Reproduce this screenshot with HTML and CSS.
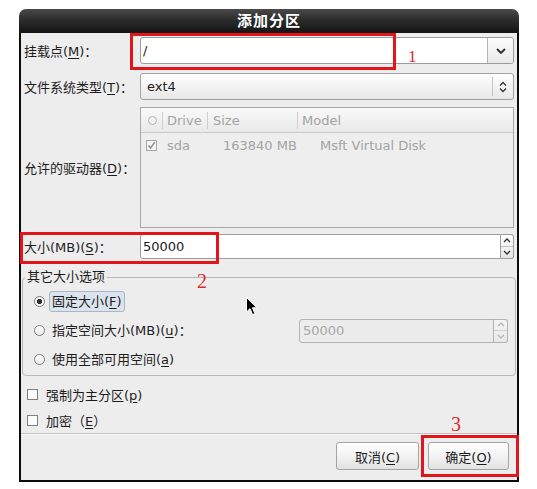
FILE: index.html
```html
<!DOCTYPE html>
<html lang="zh-CN">
<head>
<meta charset="utf-8">
<title>添加分区</title>
<link rel="stylesheet" href="styles.css">
</head>
<body>
<div class="window">
  <div class="titlebar">添加分区</div>
  <div class="dialog">
    <div class="form">
      <div class="row row-mount">
        <span class="lbl">挂载点(<u>M</u>)：</span>
        <div class="combo-entry">
          <span class="ce-text">/</span>
          <span class="ce-btn"><svg width="10" height="6" viewBox="0 0 10 6"><path d="M1 1 L5 5 L9 1" fill="none" stroke="#2b2b2b" stroke-width="1.8"/></svg></span>
        </div>
      </div>
      <div class="row row-fs">
        <span class="lbl">文件系统类型(<u>T</u>)：</span>
        <div class="combo">
          <span class="combo-text">ext4</span>
          <span class="combo-arrows"><svg width="8" height="12" viewBox="0 0 8 12"><path d="M1 4.5 L4 1.5 L7 4.5 M1 7.5 L4 10.5 L7 7.5" fill="none" stroke="#333" stroke-width="1.3"/></svg></span>
        </div>
      </div>
      <div class="row row-drives">
        <span class="lbl">允许的驱动器(<u>D</u>)：</span>
        <div class="drive-list">
          <div class="dl-head">
            <span class="hc hc-check"><span class="head-circle"></span></span>
            <span class="hc hc-drive">Drive</span>
            <span class="hc hc-size">Size</span>
            <span class="hc hc-model">Model</span>
          </div>
          <div class="dl-row">
            <span class="rc rc-check"><span class="tick-box"><svg width="9" height="9" viewBox="0 0 9 9"><path d="M1.5 4.5 L3.5 7 L7.8 1.2" fill="none" stroke="#8c8c8c" stroke-width="1.4"/></svg></span></span>
            <span class="rc rc-drive">sda</span>
            <span class="rc rc-size">163840 MB</span>
            <span class="rc rc-model">Msft Virtual Disk</span>
          </div>
        </div>
      </div>
      <div class="row row-size">
        <span class="lbl">大小(MB)(<u>S</u>)：</span>
        <div class="spin">
          <span class="spin-text">50000</span>
          <span class="spin-btns">
            <span class="sb"><svg width="8" height="5" viewBox="0 0 8 5"><path d="M1 4 L4 1 L7 4" fill="none" stroke="#333" stroke-width="1.3"/></svg></span>
            <span class="sb sb-down"><svg width="8" height="5" viewBox="0 0 8 5"><path d="M1 1 L4 4 L7 1" fill="none" stroke="#333" stroke-width="1.3"/></svg></span>
          </span>
        </div>
      </div>
    </div>

    <fieldset class="frame">
      <legend>其它大小选项</legend>
      <div class="opt">
        <span class="radio on"></span><span class="opt-label focus">固定大小(<u>F</u>)</span>
      </div>
      <div class="opt">
        <span class="radio"></span><span class="opt-label">指定空间大小(MB)(<u>u</u>)：</span>
        <div class="spin spin-disabled">
          <span class="spin-text">50000</span>
          <span class="spin-btns">
            <span class="sb"><svg width="8" height="5" viewBox="0 0 8 5"><path d="M1 4 L4 1 L7 4" fill="none" stroke="#b4b4b4" stroke-width="1.2"/></svg></span>
            <span class="sb sb-down"><svg width="8" height="5" viewBox="0 0 8 5"><path d="M1 1 L4 4 L7 1" fill="none" stroke="#b4b4b4" stroke-width="1.2"/></svg></span>
          </span>
        </div>
      </div>
      <div class="opt">
        <span class="radio"></span><span class="opt-label">使用全部可用空间(<u>a</u>)</span>
      </div>
    </fieldset>

    <div class="checks">
      <div class="chk"><span class="cbox"></span><span>强制为主分区(<u>p</u>)</span></div>
      <div class="chk"><span class="cbox"></span><span>加密（<u>E</u>）</span></div>
    </div>

    <div class="separator"></div>

    <div class="buttons">
      <button class="btn btn-cancel">取消(<u>C</u>)</button>
      <button class="btn btn-ok">确定(<u>O</u>)</button>
    </div>
  </div>

  <div class="mark mark-1"></div>
  <div class="mark mark-2"></div>
  <div class="mark mark-3"></div>
  <span class="num num-1">1</span>
  <span class="num num-2">2</span>
  <span class="num num-3">3</span>

  <svg class="cursor" width="12" height="19" viewBox="0 0 12 19"><path d="M0.5 0.5 L0.5 15 L4 11.6 L6.6 17.6 L8.9 16.6 L6.4 10.8 L11 10.8 Z" fill="#000" stroke="#fff" stroke-width="1"/></svg>
</div>
</body>
</html>
```

FILE: styles.css
```css
* { box-sizing: border-box; }

html, body {
  margin: 0;
  padding: 0;
  background: #ffffff;
}

body {
  font-family: "DejaVu Sans", "Noto Sans CJK SC", sans-serif;
  font-size: 13px;
  color: #1c1c1c;
}

u { text-decoration: underline; text-underline-offset: 2px; }

.window {
  position: relative;
  width: 500px;
  margin: 9px 0 0 19px;
}

.titlebar {
  height: 24px;
  background: linear-gradient(#4a4a4a 0%, #2c2c2c 45%, #141414 100%);
  border-radius: 7px 7px 0 0;
  color: #ffffff;
  font-weight: bold;
  font-size: 15px;
  line-height: 24px;
  text-align: center;
  letter-spacing: 1px;
}

.dialog {
  height: 449px;
  background: #ededed;
  border: 2px solid #0c0c0c;
  border-top: 0;
  display: flex;
  flex-direction: column;
}

/* ---------- form rows ---------- */
.form {
  padding: 4px 3px 0 3px;
  display: flex;
  flex-direction: column;
}

.row {
  display: flex;
  align-items: center;
}

.lbl {
  width: 116px;
  flex: none;
  white-space: nowrap;
}

.row-mount { height: 27px; margin-bottom: 9px; }
.row-fs { height: 27px; margin-bottom: 7px; }
.row-drives { height: 121px; margin-bottom: 6px; }
.row-size { height: 25px; }

/* editable combo */
.combo-entry {
  width: 374px;
  height: 27px;
  display: flex;
  border: 1px solid #9c9c9c;
  border-radius: 3px;
  background: #ffffff;
  overflow: hidden;
}
.ce-text {
  flex: 1;
  padding-left: 2px;
  line-height: 25px;
}
.ce-btn {
  width: 26px;
  flex: none;
  border-left: 1px solid #b4b4b4;
  background: linear-gradient(#fdfdfd, #e9e9e9);
  display: flex;
  align-items: center;
  justify-content: center;
}

/* plain combo */
.combo {
  width: 374px;
  height: 27px;
  display: flex;
  border: 1px solid #a2a2a2;
  border-radius: 3px;
  background: linear-gradient(#ffffff, #f1f1f1 60%, #e8e8e8);
}
.combo-text {
  flex: 1;
  padding-left: 6px;
  line-height: 25px;
}
.combo-arrows {
  width: 21px;
  flex: none;
  margin: 3px 0;
  border-left: 1px solid #c4c4c4;
  display: flex;
  align-items: center;
  justify-content: center;
}

/* drive list */
.drive-list {
  width: 374px;
  height: 121px;
  border: 1px solid #a8a8a8;
  background: #eeeeee;
  color: #a3a3a3;
}
.dl-head {
  height: 25px;
  display: flex;
  align-items: center;
  background: linear-gradient(#f9f9f9, #e9e9e9);
  border-bottom: 1px solid #c9c9c9;
}
.hc {
  height: 17px;
  line-height: 17px;
  display: flex;
  align-items: center;
}
.hc-check { width: 21px; justify-content: center; padding-left: 2px; }
.hc-drive { width: 45px; border-left: 1px solid #cfcfcf; padding-left: 4px; }
.hc-size { width: 90px; border-left: 1px solid #cfcfcf; padding-left: 5px; }
.hc-model { flex: 1; border-left: 1px solid #cfcfcf; padding-left: 4px; }
.head-circle {
  width: 9px;
  height: 9px;
  border: 1px solid #b2b2b2;
  border-radius: 50%;
}
.dl-row {
  height: 24px;
  display: flex;
  align-items: center;
}
.rc { white-space: nowrap; }
.rc-check { width: 26px; padding-left: 5px; display: flex; }
.rc-drive { width: 56px; }
.rc-size { width: 97px; }
.rc-model { flex: 1; }
.tick-box {
  width: 11px;
  height: 11px;
  border: 1px solid #a6a6a6;
  background: #f4f4f4;
  display: flex;
  align-items: center;
  justify-content: center;
}

/* spin buttons */
.spin {
  width: 374px;
  height: 25px;
  display: flex;
}
.spin-text {
  flex: 1;
  background: #ffffff;
  border: 1px solid #9c9c9c;
  border-radius: 3px 0 0 3px;
  padding-left: 2px;
  line-height: 23px;
}
.spin-btns {
  width: 13px;
  flex: none;
  display: flex;
  flex-direction: column;
  border: 1px solid #9c9c9c;
  border-left: 0;
  border-radius: 0 3px 3px 0;
  background: linear-gradient(#fdfdfd, #e6e6e6);
}
.sb {
  flex: 1;
  display: flex;
  align-items: center;
  justify-content: center;
}
.sb-down { border-top: 1px solid #c2c2c2; }

.spin-disabled {
  width: 209px;
  height: 24px;
  margin-left: auto;
}
.spin-disabled .spin-text {
  background: #ececec;
  border-color: #b3b3b3;
  color: #a6a6a6;
  padding-left: 3px;
  line-height: 22px;
}
.spin-disabled .spin-btns {
  border-color: #b3b3b3;
  width: 14px;
  background: linear-gradient(#f4f4f4, #e8e8e8);
}
.spin-disabled .sb-down { border-top-color: #d0d0d0; }

/* ---------- frame ---------- */
.frame {
  margin: 10px 1px 0 1px;
  padding: 2px 7px 1px 11px;
  border: 1px solid #b8b8b8;
  border-radius: 4px;
  min-width: 0;
}
.frame legend {
  padding: 0 2px;
  margin-left: -9px;
  line-height: 16px;
}
.opt {
  height: 29px;
  display: flex;
  align-items: center;
}
.radio {
  width: 11px;
  height: 11px;
  flex: none;
  border: 1px solid #7d7d7d;
  border-radius: 50%;
  background: linear-gradient(#ffffff, #e9e9e9);
}
.radio.on {
  background: radial-gradient(circle, #2d2d2d 0 2.3px, #f6f6f6 2.9px);
}
.opt-label {
  margin-left: 4px;
  padding: 1px 2px;
  border: 1px solid transparent;
  border-radius: 3px;
  line-height: 17px;
  white-space: nowrap;
}
.opt-label.focus {
  background: #dbe3ed;
  border-color: #a9b6c7;
}

/* ---------- checks ---------- */
.checks {
  margin-top: 5px;
  padding-left: 6px;
}
.chk {
  height: 26px;
  display: flex;
  align-items: center;
  gap: 8px;
}
.cbox {
  width: 11px;
  height: 11px;
  flex: none;
  border: 1px solid #7f7f7f;
  background: #fbfbfb;
}

.separator {
  margin-top: 0;
  height: 2px;
  border-top: 1px solid #c3c3c3;
  border-bottom: 1px solid #fafafa;
}

/* ---------- buttons ---------- */
.buttons {
  margin-top: 7px;
  display: flex;
  justify-content: flex-end;
  gap: 9px;
  padding-right: 8px;
}
.btn {
  height: 28px;
  font-family: inherit;
  font-size: 13px;
  color: #1c1c1c;
  border: 1px solid #a4a4a4;
  border-radius: 3px;
  background: linear-gradient(#ffffff, #f1f1f1 55%, #e2e2e2);
  padding: 0;
}
.btn-cancel { width: 83px; }
.btn-ok { width: 81px; }

/* ---------- annotations (overlays) ---------- */
.mark {
  position: absolute;
  border: 3px solid #e3151c;
}
.mark-1 { left: 111px; top: 24px; width: 266px; height: 37px; }
.mark-2 { left: 1px; top: 223px; width: 199px; height: 32px; }
.mark-3 { left: 402px; top: 426px; width: 98px; height: 42px; }

.num {
  position: absolute;
  font-family: "Liberation Serif", serif;
  color: #e0282e;
  line-height: 1;
}
.num-1 { left: 389px; top: 39px; font-size: 17px; }
.num-2 { left: 178px; top: 262px; font-size: 20px; }
.num-3 { left: 432px; top: 405px; font-size: 20px; }

.cursor {
  position: absolute;
  left: 227px;
  top: 288px;
}
```
